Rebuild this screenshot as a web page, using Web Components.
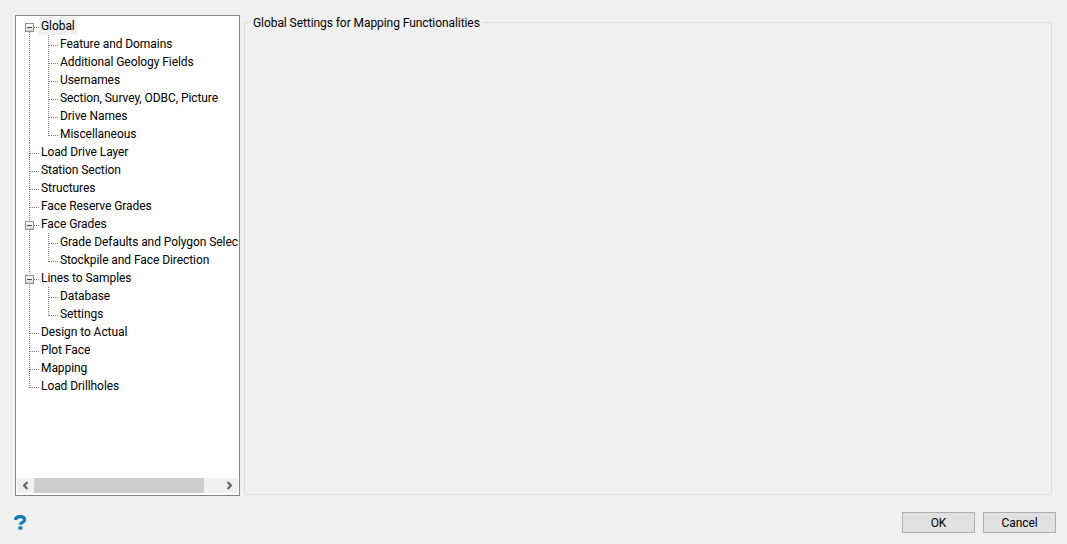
<!DOCTYPE html>
<html>
<head>
<meta charset="utf-8">
<title>Global Settings</title>
<style>
  html, body { margin: 0; height: 100%; }
  body { background: #f0f0f0; font: 12px Roboto, "Open Sans", sans-serif; letter-spacing: -0.07px; color: #000; }
</style>
</head>
<body>
<settings-dialog>
  <tree-view slot="nav">
    <tree-node label="Global" open first selected>
      <tree-node label="Feature and Domains"></tree-node>
      <tree-node label="Additional Geology Fields"></tree-node>
      <tree-node label="Usernames"></tree-node>
      <tree-node label="Section, Survey, ODBC, Picture"></tree-node>
      <tree-node label="Drive Names"></tree-node>
      <tree-node label="Miscellaneous" last></tree-node>
    </tree-node>
    <tree-node label="Load Drive Layer"></tree-node>
    <tree-node label="Station Section"></tree-node>
    <tree-node label="Structures"></tree-node>
    <tree-node label="Face Reserve Grades"></tree-node>
    <tree-node label="Face Grades" open>
      <tree-node label="Grade Defaults and Polygon Selection"></tree-node>
      <tree-node label="Stockpile and Face Direction" last></tree-node>
    </tree-node>
    <tree-node label="Lines to Samples" open>
      <tree-node label="Database"></tree-node>
      <tree-node label="Settings" last></tree-node>
    </tree-node>
    <tree-node label="Design to Actual"></tree-node>
    <tree-node label="Plot Face"></tree-node>
    <tree-node label="Mapping"></tree-node>
    <tree-node label="Load Drillholes" last></tree-node>
  </tree-view>
  <group-box slot="panel" label="Global Settings for Mapping Functionalities"></group-box>
  <dialog-button slot="actions">OK</dialog-button>
  <dialog-button slot="actions">Cancel</dialog-button>
</settings-dialog>

<script>
class SettingsDialog extends HTMLElement {
  connectedCallback() {
    this.attachShadow({ mode: 'open' });
    this.shadowRoot.innerHTML = `
      <style>
        :host { display: flex; flex-direction: column; height: 544px; box-sizing: border-box; padding: 15px 11px 11px 15px; }
        .main { display: flex; gap: 4px; height: 481px; padding-right: 4px; }
        .footer { display: flex; align-items: center; justify-content: space-between; margin-top: 16px; }
        .help { display: block; margin-left: -1px; }
        .actions { display: flex; gap: 8px; }
      </style>
      <div class="main"><slot name="nav"></slot><slot name="panel"></slot></div>
      <div class="footer">
        <svg class="help" width="14" height="16" viewBox="0 0 14 16"><path d="M1.6 5C1.6 2.6 3.6 1.7 6.2 1.7S10.6 3 10.6 4.9C10.6 7.4 6.4 7.3 6.4 9.8" fill="none" stroke="#0f7cb5" stroke-width="3.2"/><rect x="4.4" y="11.4" width="4" height="3.2" fill="#0f7cb5"/></svg>
        <div class="actions"><slot name="actions"></slot></div>
      </div>`;
  }
}

class TreeView extends HTMLElement {
  connectedCallback() {
    this.attachShadow({ mode: 'open' });
    this.shadowRoot.innerHTML = `
      <style>
        :host { display: flex; flex-direction: column; flex: none; box-sizing: border-box; width: 225px; height: 481px; border: 1px solid #828790; background: #fff; padding: 1px; }
        .items { flex: 1; overflow: hidden; white-space: nowrap; }
        .bar { flex: none; height: 15px; margin-bottom: 1px; background: #f0f0f0; display: flex; }
        .btn { width: 17px; flex: none; display: flex; align-items: center; justify-content: center; }
        .track { flex: 1; }
        .thumb { width: 170px; height: 100%; background: #cdcdcd; }
        svg { display: block; }
      </style>
      <div class="items"><slot></slot></div>
      <div class="bar">
        <div class="btn"><svg width="7" height="9" viewBox="0 0 7 9"><path d="M5.5 1 2 4.5 5.5 8" fill="none" stroke="#606060" stroke-width="2"/></svg></div>
        <div class="track"><div class="thumb"></div></div>
        <div class="btn"><svg width="7" height="9" viewBox="0 0 7 9"><path d="M1.5 1 5 4.5 1.5 8" fill="none" stroke="#606060" stroke-width="2"/></svg></div>
      </div>`;
  }
}

class TreeNode extends HTMLElement {
  connectedCallback() {
    this.attachShadow({ mode: 'open' });
    const open = this.hasAttribute('open');
    this.shadowRoot.innerHTML = `
      <style>
        :host { display: block; position: relative; }
        .row { height: 18px; display: flex; align-items: center; position: relative; }
        .label { margin-left: 22px; padding: 0 2px; line-height: 18px; }
        :host([selected]) .label { background: #f0f0f0; }
        .vline { position: absolute; left: 12px; top: 0; bottom: 0; width: 1px;
          background: repeating-linear-gradient(to bottom, #808080 0 1px, transparent 1px 2px); }
        :host([last]) .vline { bottom: auto; height: 11px; }
        :host([first]) .vline { top: 11px; }
        .hline { position: absolute; left: 13px; width: 9px; top: 10px; height: 1px;
          background: repeating-linear-gradient(to right, #808080 0 1px, transparent 1px 2px); }
        .toggle { position: absolute; left: 8px; top: 6px; width: 9px; height: 9px; box-sizing: border-box;
          border: 1px solid #919191; background: linear-gradient(#fff, #d8d8d8); }
        .toggle::after { content: ''; position: absolute; left: 1px; right: 1px; top: 3px; height: 1px; background: #2b4a7a; }
        .children { padding-left: 19px; }
      </style>
      <div class="vline"></div>
      <div class="row">
        <div class="hline"></div>
        ${open ? '<div class="toggle"></div>' : ''}
        <span class="label">${this.getAttribute('label')}</span>
      </div>
      <div class="children"><slot></slot></div>`;
  }
}

class GroupBox extends HTMLElement {
  connectedCallback() {
    this.attachShadow({ mode: 'open' });
    this.shadowRoot.innerHTML = `
      <style>
        :host { display: block; flex: 1; position: relative; box-sizing: border-box; height: 473px; margin-top: 7px; border: 1px solid #dcdcdc; }
        .legend { position: absolute; left: 6px; top: -8px; padding: 0 2px; line-height: 16px; background: #f0f0f0; }
      </style>
      <span class="legend">${this.getAttribute('label')}</span>`;
  }
}

class DialogButton extends HTMLElement {
  connectedCallback() {
    this.attachShadow({ mode: 'open' });
    this.shadowRoot.innerHTML = `
      <style>
        :host { display: flex; align-items: center; justify-content: center; box-sizing: border-box; width: 73px; height: 21px; background: #e1e1e1; border: 1px solid #adadad; }
      </style>
      <slot></slot>`;
  }
}

customElements.define('settings-dialog', SettingsDialog);
customElements.define('tree-view', TreeView);
customElements.define('tree-node', TreeNode);
customElements.define('group-box', GroupBox);
customElements.define('dialog-button', DialogButton);
</script>
</body>
</html>
